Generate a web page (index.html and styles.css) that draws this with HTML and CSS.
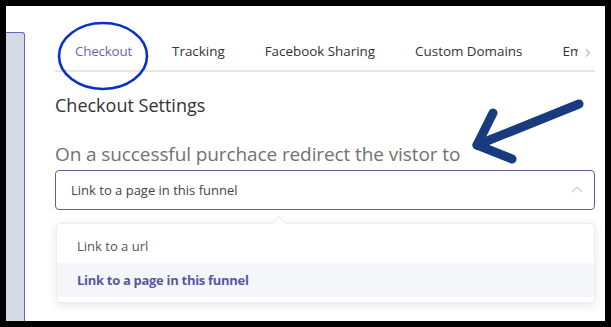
FILE: index.html
```html
<!DOCTYPE html>
<html>
<head>
<meta charset="utf-8">
<link rel="stylesheet" href="styles.css">
</head>
<body>
<div class="frame">
  <div class="sidebar"></div>
  <div class="main">
    <div class="tabs">
      <div class="tab active">Checkout</div>
      <div class="tab">Tracking</div>
      <div class="tab">Facebook Sharing</div>
      <div class="tab">Custom Domains</div>
      <div class="tab clip">Email</div>
      <div class="tab-next">
        <svg width="8" height="10" viewBox="0 0 8 10"><path d="M2 1.5 L5.5 5 L2 8.5" fill="none" stroke="#b8bcc6" stroke-width="1.2"/></svg>
      </div>
    </div>
    <h2 class="title">Checkout Settings</h2>
    <div class="label">On a successful purchace redirect the vistor to</div>
    <div class="select">
      <span>Link to a page in this funnel</span>
      <svg class="chev" width="12" height="8" viewBox="0 0 12 8"><path d="M1 7 L6 2 L11 7" fill="none" stroke="#c9ccd3" stroke-width="1.2"/></svg>
    </div>
    <div class="dropdown">
      <div class="caret"></div>
      <div class="opt">Link to a url</div>
      <div class="opt selected">Link to a page in this funnel</div>
    </div>
  </div>
  <svg class="annot" width="611" height="327" viewBox="0 0 611 327">
    <ellipse cx="103" cy="56" rx="44" ry="33" fill="none" stroke="#0a2fcf" stroke-width="2.6"/>
    <g stroke="#183a7e" stroke-width="9" stroke-linecap="round" stroke-linejoin="round" fill="none">
      <path d="M579 104 L477 145"/>
      <path d="M493 113 L477 145 L512 159"/>
    </g>
  </svg>
</div>
</body>
</html>
```
FILE: styles.css
```css
* { box-sizing: border-box; }
html, body { margin: 0; padding: 0; }
body {
  background: #000;
  width: 611px;
  height: 327px;
  overflow: hidden;
  font-family: "Open Sans", "Liberation Sans", sans-serif;
}
.frame {
  position: relative;
  margin: 6px;
  width: 599px;
  height: 315px;
  background: #fff;
  display: flex;
  overflow: hidden;
}
.sidebar {
  width: 19px;
  margin-top: 26px;
  background: #d3dce6;
  border-top: 1px solid #6a64b0;
  border-right: 1px solid #6a64b0;
  border-top-right-radius: 3px;
  flex: none;
}
.main {
  flex: 1;
  padding-left: 30px;
  padding-right: 10px;
  display: flex;
  flex-direction: column;
  min-width: 0;
}
.tabs {
  display: flex;
  margin-top: 32px;
  height: 34px;
  border-bottom: 2px solid #e4e6eb;
  position: relative;
  overflow: hidden;
}
.tab {
  padding: 0 20px;
  font-size: 13.4px;
  color: #333;
  line-height: 26px;
  white-space: nowrap;
  flex: none;
}
.tab.active {
  color: #6b67a8;
  border-bottom: 2px solid #5e59a5;
  margin: 0 0 -2px 0;
  padding: 0;
  margin-left: 20px;
  margin-right: 20px;
  height: 34px;
  letter-spacing: -0.2px;
}
.tab.clip {
  width: 36px;
  overflow: hidden;
  padding-right: 0;
}
.tab-next {
  position: absolute;
  right: 0;
  top: 0;
  width: 14px;
  height: 32px;
  background: #fff;
  display: flex;
  align-items: flex-start;
  justify-content: center;
  padding-top: 10px;
}
.title {
  margin: 22px 0 0 0;
  font-size: 18px;
  font-weight: 400;
  color: #333;
  line-height: 22px;
}
.label {
  margin-top: 26px;
  font-size: 19px;
  color: #717171;
  line-height: 24px;
  letter-spacing: -0.1px;
}
.select {
  margin-top: 4px;
  height: 40px;
  border: 1px solid #5f5aa8;
  border-radius: 4px;
  display: flex;
  align-items: center;
  justify-content: space-between;
  padding: 0 11px 0 15px;
  font-size: 13px;
  color: #444;
}
.chev { margin-top: -2px; }
.dropdown {
  position: relative;
  margin-top: 13px;
  margin-left: 1px;
  background: #fff;
  border: 1px solid #eceef2;
  border-radius: 4px;
  box-shadow: 0 2px 10px rgba(0,0,0,0.10);
  padding: 5px 0;
}
.caret {
  position: absolute;
  top: -6px;
  left: 217px;
  width: 10px;
  height: 10px;
  background: #fff;
  border-top: 1px solid #eceef2;
  border-left: 1px solid #eceef2;
  transform: rotate(45deg);
}
.opt {
  position: relative;
  height: 34px;
  line-height: 34px;
  padding-left: 20px;
  font-size: 13px;
  color: #555;
}
.opt.selected {
  background: #f5f6fa;
  color: #5b579e;
  font-weight: 700;
  letter-spacing: -0.3px;
}
.annot {
  position: absolute;
  left: -6px;
  top: -6px;
  pointer-events: none;
}
```
